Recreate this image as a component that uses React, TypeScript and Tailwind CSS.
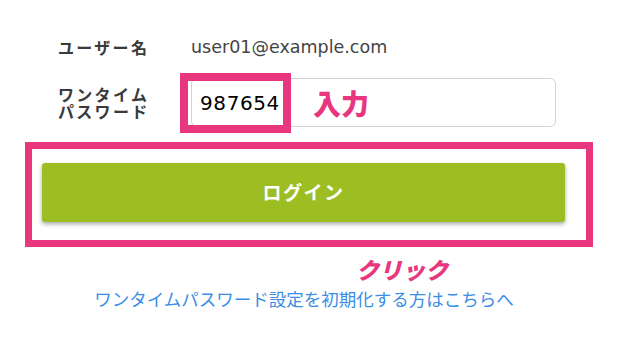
export default function App() {
  return (
    <div
      className="w-[623px] h-[354px] bg-white overflow-hidden"
      style={{ fontFamily: '"Noto Sans CJK JP", "Noto Sans", sans-serif' }}
    >
      {/* ユーザー名 */}
      <div className="flex items-center h-[22px] mt-[36px] pl-[58px]">
        <div className="w-[133px] text-[16px] font-bold tracking-[2.3px] text-[#3a3a3a] leading-[22px]">
          ユーザー名
        </div>
        <div className="text-[17.5px] text-[#444] leading-[22px]" style={{ fontFamily: '"DejaVu Sans", "Noto Sans CJK JP", sans-serif' }}>
          user01@example.com
        </div>
      </div>

      {/* ワンタイムパスワード */}
      <div className="flex items-center mt-[20px] pl-[58px]">
        <div className="w-[133px] text-[16px] font-bold tracking-[2.3px] text-[#3a3a3a] leading-[17px]">
          ワンタイム
          <br />
          パスワード
        </div>
        <div className="relative w-[365px] h-[49px] rounded-[6px] border border-[#d2d2d2] flex items-center">
          <span
            className="pl-[8px] text-[20px] tracking-[0.6px] text-black"
            style={{ fontFamily: '"DejaVu Sans", sans-serif' }}
          >
            987654
          </span>
          <span className="ml-[33px] text-[28px] font-black text-[#e8367f] leading-none">入力</span>
          <div className="absolute left-[-12px] top-[-6px] w-[111px] h-[60px] border-[8px] border-[#e8367f]" />
        </div>
      </div>

      {/* ログイン */}
      <div className="ml-[25px] mt-[15px] w-[568px] h-[105px] border-[7px] border-[#e8367f] pl-[10px] pt-[14px]">
        <button className="w-[523px] h-[59px] bg-[#9cbe22] rounded-[3px] shadow-[0_2px_4px_rgba(0,0,0,0.35)] text-white text-[19px] font-bold tracking-[1.5px] flex items-center justify-center">
          ログイン
        </button>
      </div>

      <div className="pl-[356px] mt-[7px] h-[30px] text-[23px] font-black italic text-[#e8367f] leading-[30px]">
        クリック
      </div>

      <div className="w-[608px] text-center mt-[4px] text-[17.5px] text-[#3a8ee6] leading-[22px]">
        ワンタイムパスワード設定を初期化する方はこちらへ
      </div>
    </div>
  );
}
